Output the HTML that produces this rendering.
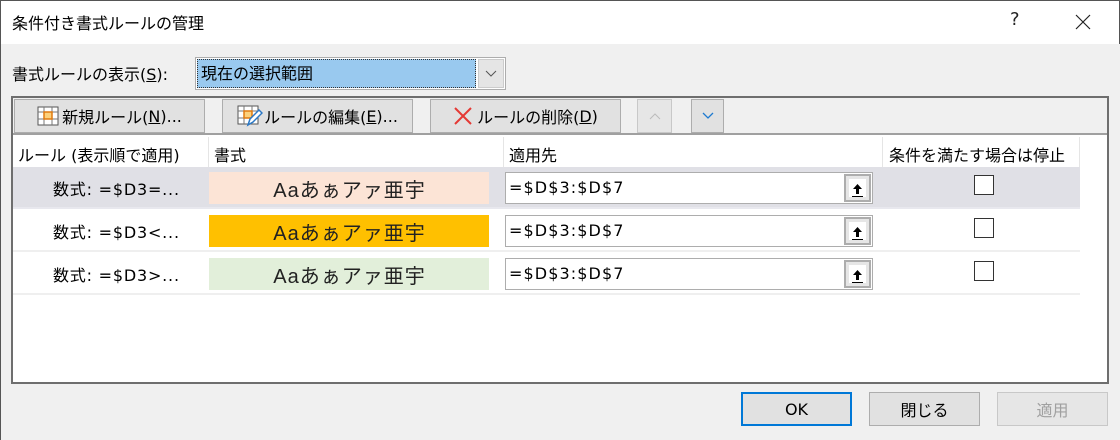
<!DOCTYPE html>
<html><head><meta charset="utf-8"><style>
*{box-sizing:border-box;margin:0;padding:0}
body{width:1120px;height:440px;overflow:hidden;background:#f0f0f0;font-family:"DejaVu Sans","Noto Sans CJK JP",sans-serif;font-size:16px;color:#000;position:relative}
.abs{position:absolute}
.title{left:0;top:0;width:1120px;height:44px;background:#fff;border-top:1px solid #555;border-left:1px solid #555;border-right:1px solid #555}
.btn{position:absolute;background:#e1e1e1;border:1px solid #adadad;display:flex;align-items:center;justify-content:center;font-size:16px}
.row{position:absolute;left:13px;width:1067px;height:42px;border-bottom:2px solid #efefef}
.fmt{position:absolute;left:196px;top:5px;width:280px;height:32px;display:flex;align-items:center;justify-content:center;font-size:20px;color:#222;letter-spacing:1px;padding-left:1px;font-family:"Liberation Sans","Noto Sans CJK JP",sans-serif}
.rule{position:absolute;left:40px;top:2px;height:42px;line-height:42px;letter-spacing:0.8px}
.inp{position:absolute;left:492px;top:5px;width:368px;height:32px;background:#fff;border:1px solid #adadad;line-height:30px;padding-left:3px;font-size:16px;letter-spacing:1.1px}
.ref{position:absolute;right:1px;top:1px;width:27px;height:28px;background:#e6e6e6;border:2px solid #adadad;display:flex;align-items:center;justify-content:center}
.ref i{display:block;width:17px;height:18px;background:#fff}
.cb{position:absolute;left:961px;top:8px;width:20px;height:20px;border:1px solid #333;background:#fff}
u{text-decoration:underline}
</style></head><body>
<div class="abs title"></div>
<div class="abs" style="left:12px;top:10px;font-size:16px">条件付き書式ルールの管理</div>
<div class="abs" style="left:1010px;top:9px;font-size:18px;color:#222">?</div>
<svg class="abs" style="left:1075px;top:14px" width="16" height="16"><path d="M1 1L15 15M15 1L1 15" stroke="#222" stroke-width="1.2"/></svg>
<div class="abs" style="left:0;top:44px;width:1px;height:396px;background:#555"></div>
<div class="abs" style="left:12px;top:61px">書式ルールの表示(<u>S</u>):</div>
<div class="abs" style="left:195px;top:57px;width:311px;height:33px;border:1px solid #adadad;background:#fff"></div>
<div class="abs" style="left:197px;top:59px;width:279px;height:29px;background:#99c9ef;border:1px dotted #333;padding-left:3px;line-height:27px">現在の選択範囲</div>
<div class="abs" style="left:478px;top:59px;width:26px;height:29px;background:#e5e5e5;border:1px solid #ccc"></div>
<svg class="abs" style="left:485px;top:70px" width="12" height="8"><path d="M1 1L6 6L11 1" stroke="#555" fill="none"/></svg>

<div class="abs" style="left:11px;top:96px;width:1098px;height:288px;border:2px solid #6e6e6e;background:#fff"></div>
<div class="abs" style="left:13px;top:98px;width:1094px;height:37px;background:#f0f0f0;border-bottom:2px solid #a0a0a0"></div>
<div class="btn" style="left:14px;top:99px;width:191px;height:34px">
<svg width="22" height="20" style="margin-right:3px"><rect x="1" y="1" width="20" height="18" fill="#fff" stroke="#555"/><path d="M1 6H21M1 13H21M7 1V19M15 1V19" stroke="#777"/><rect x="7" y="6" width="8" height="7" fill="#fcd17c" stroke="#e07a10" stroke-width="1.5"/></svg>新規ルール(<u>N</u>)...</div>
<div class="btn" style="left:222px;top:99px;width:191px;height:34px">
<svg width="26" height="22" style="margin-right:1px"><rect x="1" y="1" width="20" height="18" fill="#fff" stroke="#555"/><path d="M1 6H21M1 13H21M7 1V19M15 1V19" stroke="#777"/><rect x="7" y="6" width="8" height="7" fill="#fcd17c" stroke="#e07a10" stroke-width="1.5"/><path d="M11 20L13 14L22 5L25 8L16 17Z" fill="#fff" stroke="#2b78c5" stroke-width="1.5"/></svg>ルールの編集(<u>E</u>)...</div>
<div class="btn" style="left:430px;top:99px;width:191px;height:34px">
<svg width="20" height="20" style="margin-right:4px"><path d="M2 2L18 18M18 2L2 18" stroke="#e53935" stroke-width="2"/></svg>ルールの削除(<u>D</u>)</div>
<div class="btn" style="left:637px;top:99px;width:35px;height:34px;background:#e6e6e6;border-color:#c8c8c8"><svg width="12" height="8"><path d="M1 7L6 2L11 7" stroke="#bbb" fill="none"/></svg></div>
<div class="btn" style="left:691px;top:99px;width:33px;height:34px"><svg width="12" height="8"><path d="M1 1L6 6L11 1" stroke="#1e7ad0" fill="none" stroke-width="1.3"/></svg></div>

<div class="abs" style="left:13px;top:137px;width:1067px;height:30px;background:#fff">
<div class="abs" style="left:5px;top:5px">ルール (表示順で適用)</div>
<div class="abs" style="left:195px;top:0;width:1px;height:30px;background:#e5e5e5"></div>
<div class="abs" style="left:201px;top:5px">書式</div>
<div class="abs" style="left:490px;top:0;width:1px;height:30px;background:#e5e5e5"></div>
<div class="abs" style="left:496px;top:5px">適用先</div>
<div class="abs" style="left:869px;top:0;width:1px;height:30px;background:#e5e5e5"></div>
<div class="abs" style="left:876px;top:5px">条件を満たす場合は停止</div>
<div class="abs" style="left:1066px;top:0;width:1px;height:30px;background:#e5e5e5"></div>
</div>

<div class="row" style="top:167px;background:#e0e0e6;border-bottom-color:#e8e8ee">
<div class="rule">数式: =$D3=...</div>
<div class="fmt" style="background:#fce4d6">Aaあぁアァ亜宇</div>
<div class="inp">=$D$3:$D$7<div class="ref"><i><svg width="17" height="18"><path d="M8.5 3L13 8H10V13H7V8H4Z" fill="#000"/><path d="M3 15.5H14" stroke="#000"/></svg></i></div></div>
<div class="cb"></div></div>
<div class="row" style="top:210px;background:#fff">
<div class="rule">数式: =$D3&lt;...</div>
<div class="fmt" style="background:#ffc000">Aaあぁアァ亜宇</div>
<div class="inp">=$D$3:$D$7<div class="ref"><i><svg width="17" height="18"><path d="M8.5 3L13 8H10V13H7V8H4Z" fill="#000"/><path d="M3 15.5H14" stroke="#000"/></svg></i></div></div>
<div class="cb"></div></div>
<div class="row" style="top:253px;background:#fff">
<div class="rule">数式: =$D3&gt;...</div>
<div class="fmt" style="background:#e2efda">Aaあぁアァ亜宇</div>
<div class="inp">=$D$3:$D$7<div class="ref"><i><svg width="17" height="18"><path d="M8.5 3L13 8H10V13H7V8H4Z" fill="#000"/><path d="M3 15.5H14" stroke="#000"/></svg></i></div></div>
<div class="cb"></div></div>

<div class="btn" style="left:741px;top:392px;width:111px;height:34px;border:2px solid #0078d7">OK</div>
<div class="btn" style="left:869px;top:392px;width:111px;height:34px">閉じる</div>
<div class="btn" style="left:997px;top:392px;width:111px;height:34px;background:#e6e6e6;border-color:#c8c8c8;color:#a0a0a0">適用</div>
</body></html>
